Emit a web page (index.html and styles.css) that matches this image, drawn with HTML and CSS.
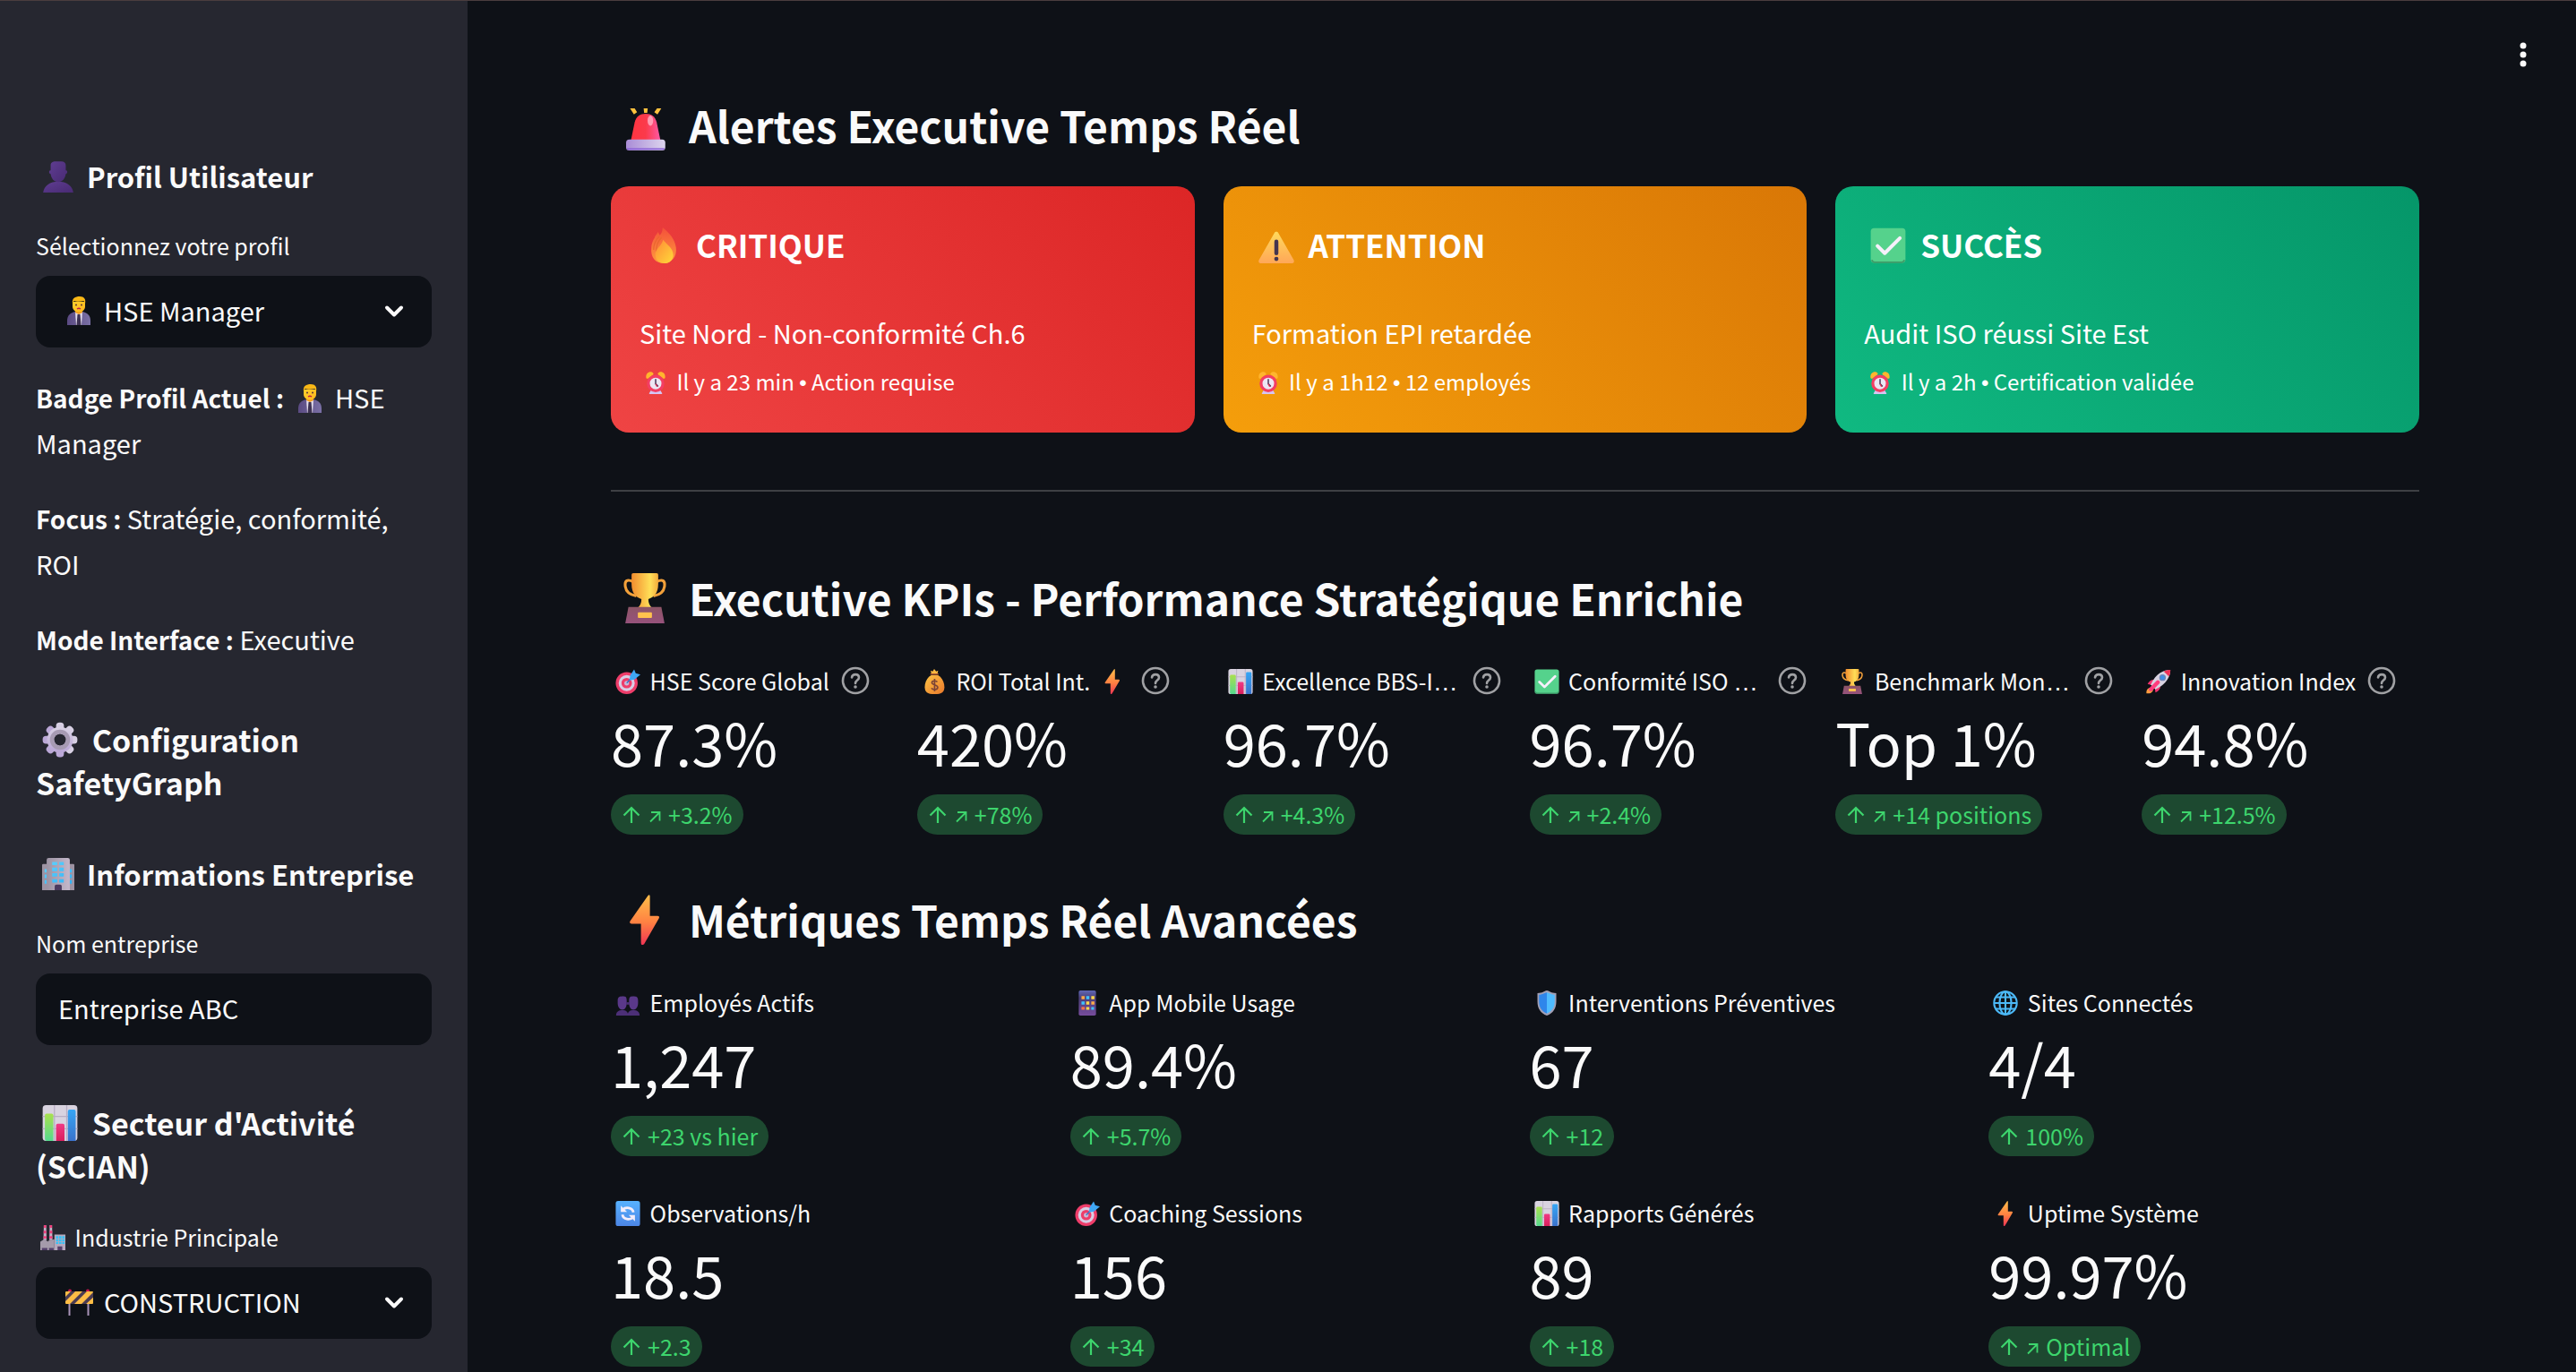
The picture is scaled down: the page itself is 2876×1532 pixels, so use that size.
FILE: index.html
```html
<!DOCTYPE html>
<html lang="fr">
<head>
<meta charset="utf-8">
<meta name="viewport" content="width=device-width, initial-scale=1">
<title>SafetyGraph</title>
<link rel="stylesheet" href="styles.css">
</head>
<body>
<svg class="sprite" aria-hidden="true">
  <defs>
    <linearGradient id="gPurple" x1="0" y1="0" x2="1" y2="1"><stop offset="0" stop-color="#5f3d91"/><stop offset="1" stop-color="#482a73"/></linearGradient>
    <linearGradient id="gSuit" x1="0" y1="0" x2="1" y2="0"><stop offset="0" stop-color="#5a4a82"/><stop offset="1" stop-color="#7a70a6"/></linearGradient>
    <linearGradient id="gFace" x1="0" y1="0" x2="1" y2="1"><stop offset="0" stop-color="#ffd02c"/><stop offset="1" stop-color="#ffb51c"/></linearGradient>
    <linearGradient id="gGear" x1="0" y1="0" x2="0" y2="1"><stop offset="0" stop-color="#d9d2e4"/><stop offset="1" stop-color="#b9a5d6"/></linearGradient>
    <linearGradient id="gWall" x1="0" y1="0" x2="1" y2="0"><stop offset="0" stop-color="#9c93a3"/><stop offset="1" stop-color="#c4b8cb"/></linearGradient>
    <linearGradient id="gPane" x1="0" y1="0" x2="1" y2="1"><stop offset="0" stop-color="#62d3ff"/><stop offset="1" stop-color="#2fb2f5"/></linearGradient>
    <linearGradient id="gGreenBar" x1="0" y1="0" x2="0" y2="1"><stop offset="0" stop-color="#a9e04e"/><stop offset="1" stop-color="#55d98e"/></linearGradient>
    <linearGradient id="gPinkBar" x1="0" y1="0" x2="0" y2="1"><stop offset="0" stop-color="#f03a86"/><stop offset="1" stop-color="#d91f5c"/></linearGradient>
    <linearGradient id="gBlueBar" x1="0" y1="0" x2="0" y2="1"><stop offset="0" stop-color="#36a6f5"/><stop offset="1" stop-color="#3a72cc"/></linearGradient>
    <linearGradient id="gSiren" x1="0" y1="0" x2="1" y2="0"><stop offset="0" stop-color="#ff3440"/><stop offset="0.5" stop-color="#fb3a4b"/><stop offset="1" stop-color="#ff5aa6"/></linearGradient>
    <linearGradient id="gBase" x1="0" y1="0" x2="1" y2="0"><stop offset="0" stop-color="#a98cd6"/><stop offset="1" stop-color="#ddd5ee"/></linearGradient>
    <linearGradient id="gFire" x1="0" y1="0" x2="0" y2="1"><stop offset="0" stop-color="#f4503a"/><stop offset="1" stop-color="#ff9b3d"/></linearGradient>
    <linearGradient id="gFlame" x1="0" y1="0" x2="1" y2="1"><stop offset="0" stop-color="#ff8a35"/><stop offset="1" stop-color="#ffd93a"/></linearGradient>
    <linearGradient id="gWarn" x1="0" y1="0" x2="0" y2="1"><stop offset="0" stop-color="#ffd95c"/><stop offset="1" stop-color="#ffa758"/></linearGradient>
    <linearGradient id="gCup" x1="0" y1="0" x2="1" y2="0"><stop offset="0" stop-color="#f28d2f"/><stop offset="0.7" stop-color="#ffdf58"/><stop offset="1" stop-color="#f3ac3c"/></linearGradient>
    <linearGradient id="gPlinth" x1="0" y1="0" x2="0" y2="1"><stop offset="0" stop-color="#8d5566"/><stop offset="1" stop-color="#96527c"/></linearGradient>
    <linearGradient id="gBolt" x1="0" y1="0" x2="0" y2="1"><stop offset="0" stop-color="#ffbe4a"/><stop offset="0.55" stop-color="#ff8142"/><stop offset="1" stop-color="#f03554"/></linearGradient>
    <linearGradient id="gSync" x1="0" y1="0" x2="0" y2="1"><stop offset="0" stop-color="#57b2ff"/><stop offset="1" stop-color="#4c86e6"/></linearGradient>
    <linearGradient id="gPhone" x1="0" y1="0" x2="0" y2="1"><stop offset="0" stop-color="#5f67b5"/><stop offset="0.3" stop-color="#4b3f78"/><stop offset="1" stop-color="#764c9c"/></linearGradient>
    <linearGradient id="gBag" x1="0" y1="0" x2="1" y2="1"><stop offset="0" stop-color="#ffc545"/><stop offset="1" stop-color="#e8772b"/></linearGradient>
    <clipPath id="cBoard"><rect x="1" y="4" width="31" height="14" rx="1"/></clipPath>
  </defs>

  <symbol id="bust" viewBox="0 0 32 32">
    <path d="M1 32C2 25 8 21 16 21S30 25 31 32Z" fill="url(#gPurple)"/>
    <path d="M8.500 5C8.500 2 11 1 13 1H19C22 1 23.500 2.500 23.500 5V10C25.500 9.500 25.500 13.500 23.500 13.500C23 18 20 21.500 16 21.500S9 18 8.500 13.500C6.500 13.500 6.500 9.500 8.500 10Z" fill="url(#gPurple)"/>
  </symbol>
  <symbol id="busts" viewBox="0 0 32 32">
    <path d="M1 32C1 27 4 25 9 25S16 27 16.500 32ZM15.500 32C16 27 18 25 23 25S31 27 31 32Z" fill="#4c2f77"/>
    <path d="M3 13C3 8 6 7.500 9.500 7.500S14.500 8 14.500 13V16C14.500 21 12.500 24.500 9 24.500S3 21 3 16ZM17.500 13C17.500 8 19.500 7.500 23 7.500S29 8 29 13V16C29 21 26.500 24.500 23 24.500S17.500 21 17.500 16Z" fill="#5a3889"/>
    <path d="M14 15H18V18H14Z" fill="#4c2f77"/>
  </symbol>
  <symbol id="worker" viewBox="0 0 32 32">
    <path d="M3 32V27C3 21 7 18 12 17H20C25 18 29 21 29 27V32Z" fill="url(#gSuit)"/>
    <path d="M12 17H20L19 32H13Z" fill="#e4ddec"/>
    <path d="M14.500 20H17.500L18.500 32H13.500Z" fill="#3d3152"/>
    <path d="M12 14H20V18L16 20L12 18Z" fill="#f09a1d"/>
    <path d="M9 6H23V11C23 15 20 17.500 16 17.500S9 15 9 11Z" fill="url(#gFace)"/>
    <path d="M9 8C8 2 12 0 17 0C22 0 24 3 23 8L21.500 5C18 6 13 6 10.500 5Z" fill="#f9b816"/>
    <circle cx="13" cy="9.500" r="1" fill="#53303c"/><circle cx="19" cy="9.500" r="1" fill="#53303c"/>
    <path d="M14 14Q16 12.500 18 14" stroke="#bb1d48" stroke-width="1.400" fill="none"/>
  </symbol>
  <symbol id="gear" viewBox="0 0 32 32">
    <g fill="url(#gGear)">
      <rect x="12.500" y="0.500" width="7" height="31" rx="3"/>
      <rect x="12.500" y="0.500" width="7" height="31" rx="3" transform="rotate(45 16 16)"/>
      <rect x="12.500" y="0.500" width="7" height="31" rx="3" transform="rotate(90 16 16)"/>
      <rect x="12.500" y="0.500" width="7" height="31" rx="3" transform="rotate(135 16 16)"/>
      <circle cx="16" cy="16" r="11.500"/>
    </g>
    <circle cx="16" cy="16" r="7" fill="#262730" stroke="#a79bb3" stroke-width="4"/>
    <circle cx="16" cy="16" r="5" fill="#262730"/>
  </symbol>
  <symbol id="office" viewBox="0 0 32 32">
    <path d="M0 7Q0 6 1 6H31Q32 6 32 7V32H0Z" fill="#9d93a3"/>
    <path d="M4.500 2Q4.500 0 6.500 0H25.500Q27.500 0 27.500 2V32H4.500Z" fill="url(#gWall)"/>
    <path d="M10 4H15V7H10ZM17 4H21.500V7H17ZM10 9.500H15V13H10ZM17 9.500H21.500V13H17ZM10 15H15V18.500H10ZM17 15H21.500V18.500H17ZM10 21H15V24.500H10ZM17 21H21.500V24.500H17ZM2.500 11H4.500V14.500H2.500ZM2.500 16.500H4.500V20H2.500ZM2.500 22H4.500V25.500H2.500ZM27.500 11H29.500V14.500H27.500ZM27.500 16.500H29.500V20H27.500ZM27.500 22H29.500V25.500H27.500Z" fill="url(#gPane)"/>
    <path d="M12.500 32V28Q12.500 26.500 14 26.500H18Q19.500 26.500 19.500 28V32Z" fill="#4a3a5e"/>
  </symbol>
  <symbol id="chart" viewBox="0 0 32 32">
    <rect x="0.500" y="0" width="31" height="32" rx="3" fill="#d9d3e0"/>
    <path d="M11 0V32M22 0V32M0.500 10H31.500M0.500 21H31.500" stroke="#b9aec4" stroke-width="1"/>
    <path d="M2.500 9Q2.500 7.500 4 7.500H8.500Q10 7.500 10 9V32H4Q2.500 32 2.500 30Z" fill="url(#gGreenBar)"/>
    <path d="M12.500 18Q12.500 16.500 14 16.500H18.500Q20 16.500 20 18V32H12.500Z" fill="url(#gPinkBar)"/>
    <path d="M23 5.500Q23 4 24.500 4H28.500Q30 4 30 5.500V32H23Z" fill="url(#gBlueBar)"/>
  </symbol>
  <symbol id="factory" viewBox="0 0 32 32">
    <path d="M4.500 0H7.500L8 19H4ZM12 0H15L15.500 19H11.500Z" fill="#bfb3c6"/>
    <path d="M4.500 0H7.500V3.500H4.400ZM4.400 7H7.600V10.500H4.300ZM4.200 14H7.800V17H4.100ZM12 0H15V3.500H12ZM12 7H15.200V10.500H11.800ZM11.700 14H15.400V17H11.600Z" fill="#f03f7c"/>
    <path d="M0 21L5 18L10 21V20L18 18V32H0Z" fill="#a59bab"/>
    <rect x="18" y="12" width="14" height="20" fill="#b5a9bd"/>
    <path d="M20 14H23V17H20ZM24 14H27V17H24ZM28 14H31V17H28ZM20 18H23V20.500H20ZM24 18H27V20.500H24ZM28 18H31V20.500H28ZM20 21.500H23V24H20ZM24 21.500H27V24H24ZM28 21.500H31V24H28Z" fill="#35c3f7"/>
    <path d="M2 29H9V32H2ZM11 29H17V32H11ZM22 27H28V32H22Z" fill="#54406a"/>
  </symbol>
  <symbol id="barrier" viewBox="0 0 32 32">
    <path d="M5.500 18V31M26.500 18V31" stroke="#a893b8" stroke-width="2"/>
    <circle cx="6" cy="3.500" r="2" fill="#c8164d"/><circle cx="26" cy="3.500" r="2" fill="#c8164d"/>
    <g clip-path="url(#cBoard)">
      <rect x="0" y="3" width="32" height="16" fill="#ffbd45"/>
      <path d="M-2 13L8 3H13L-3 19ZM5 19L21 3H26L10 19ZM18 19L34 3V9L23 19Z" fill="#4b3c52"/>
    </g>
  </symbol>
  <symbol id="siren" viewBox="0 0 32 32">
    <path d="M4.500 2L9 9L11 7.500L7.500 2ZM15 3H18L17.500 8H15.500ZM26 2L22 7.500L24 9L28.500 2Z" fill="#ffc23e"/>
    <path d="M7 26L9.500 14C10.500 10 13 8.500 16.500 8.500S22.500 10 23.500 14L26 26Z" fill="url(#gSiren)"/>
    <ellipse cx="19.500" cy="13" rx="1.800" ry="3.300" fill="#ffb3c6" opacity="0.800"/>
    <rect x="4" y="25" width="25" height="7" rx="2" fill="url(#gBase)"/>
    <path d="M4.500 31H28.500" stroke="#8b63d6" stroke-width="1"/>
  </symbol>
  <symbol id="fire" viewBox="0 0 32 32">
    <path d="M15 0C21 5 26 10 27 18C28 26 23 32 16 32S4 27 5 18C5 15 6 12 8 9C8 8 9 7 11 4L12.500 7C14.500 5 15 3 15 0Z" fill="url(#gFire)"/>
    <path d="M7 20C7 14 10 10 12 8M9.500 22C9 15 12 11 14 9" stroke="#e9682f" stroke-width="1" fill="none"/>
    <path d="M15.500 11C18 15 24.500 18 24.500 24.500C24.500 29 21 32 16.500 32S8.500 29 8.500 24C8.500 19 14 17 15.500 11Z" fill="url(#gFlame)"/>
  </symbol>
  <symbol id="warning" viewBox="0 0 32 32">
    <path d="M14.200 5C15 3.500 17 3.500 17.800 5L31.500 29C32.200 30.500 31.500 32 30 32H2C0.500 32 -0.200 30.500 0.500 29Z" fill="url(#gWarn)"/>
    <path d="M16 12.500V23" stroke="#45354f" stroke-width="3.600" stroke-linecap="round"/>
    <circle cx="16" cy="28" r="1.900" fill="#45354f"/>
  </symbol>
  <symbol id="check" viewBox="0 0 32 32">
    <rect x="0.500" y="0.500" width="31" height="31" rx="3" fill="#55d28c"/>
    <path d="M1.500 29Q2 31 4 31H28Q30 31 30.500 29" stroke="#3d9a68" stroke-width="1.400" fill="none"/>
    <path d="M6.500 16.500L13 23L26.500 9.500" stroke="#f6f0fb" stroke-width="3.200" stroke-linecap="round" stroke-linejoin="round" fill="none"/>
  </symbol>
  <symbol id="clock" viewBox="0 0 32 32">
    <path d="M3 10C2 4 6 1 10 1.500C12 2 13 3 13 5L5 11ZM29 10C30 4 26 1 22 1.500C20 2 19 3 19 5L27 11Z" fill="#ffb52e"/>
    <path d="M7 31L10 26H22L25 31Q25 32 24 32H8Q7 32 7 31Z" fill="#d5c5f3"/>
    <circle cx="16" cy="17.500" r="10" fill="#ece6f3" stroke="#f43e63" stroke-width="4"/>
    <path d="M16 12V18L19 21" stroke="#473454" stroke-width="1.800" fill="none" stroke-linecap="round"/>
    <path d="M16 18L18 22" stroke="#ec2d55" stroke-width="1.400"/>
  </symbol>
  <symbol id="trophy" viewBox="0 0 32 32">
    <path d="M8.500 5.500C4.500 3.500 3 5 3.500 8.500S7 14 10.500 14.500M23.500 5.500C27.500 3.500 29 5 28.500 8.500S25 14 21.500 14.500" stroke="#f2a03a" stroke-width="1.800" fill="none"/>
    <path d="M7.500 1Q7.500 0 8.500 0H23.500Q24.500 0 24.500 1V7C24.500 13 21.500 15.500 18.200 16.500C18.200 19 19 20.500 20.500 22H11.500C13 20.500 13.800 19 13.800 16.500C10.500 15.500 7.500 13 7.500 7Z" fill="url(#gCup)"/>
    <path d="M5.500 21.500H26.500L28.500 32H3.500Z" fill="url(#gPlinth)"/>
    <rect x="11.500" y="25" width="9" height="3.500" rx="0.500" fill="#ffc24e"/>
  </symbol>
  <symbol id="target" viewBox="0 0 32 32">
    <circle cx="14.500" cy="18" r="14" fill="#ee3d6a"/>
    <circle cx="14.500" cy="18" r="8.500" fill="#ee3d6a" stroke="#d8cde4" stroke-width="3.600"/>
    <circle cx="14.500" cy="18" r="3" fill="#c7b9d8"/>
    <path d="M14.500 18L24 8" stroke="#3a75c8" stroke-width="1.600"/>
    <path d="M19 8L24 0.500L26 5.500L32 7L24.500 13.500L18 14.500Z" fill="#3fa7f5"/>
  </symbol>
  <symbol id="moneybag" viewBox="0 0 32 32">
    <path d="M11.500 2L14 3L16 0L18.500 3L21 2L20 7H12.500Z" fill="#ffb940"/>
    <path d="M11 6.500H21.500" stroke="#b2562c" stroke-width="1.600"/>
    <path d="M12 8H21C26 11 29 17 29 23C29 29 26 32 16.500 32S4 29 4 23C4 17 7 11 12 8Z" fill="url(#gBag)"/>
    <path d="M20 16.500C18.500 14.500 13 14.500 13 17.500C13 21 20.500 19.500 20.500 23.500C20.500 27 14 27 12.500 24.500M16.500 12.500V28.500" stroke="#7c4436" stroke-width="1.900" fill="none"/>
  </symbol>
  <symbol id="bolt" viewBox="0 0 32 32">
    <path d="M18 0.500Q19.200 -0.500 19.200 1V13.500H24Q25.500 13.500 25 15L15.500 31.500Q13.500 33 13.500 30.500V18.500H7.500Q6 18.500 6.500 17Z" fill="url(#gBolt)"/>
  </symbol>
  <symbol id="rocket" viewBox="0 0 32 32">
    <path d="M0.500 31C0 27 2 24 6 24L9 27C8 30 4 32 0.500 31Z" fill="#ff9d3f"/>
    <path d="M2 19C4 15 8 13 11 14L9 21ZM12 30C17 28 19 24 18 21L11 23Z" fill="#f2316d"/>
    <path d="M31 1C22 1 12 6 6 20L12 26C25 20 31 10 31 1Z" fill="#d9d3e2"/>
    <path d="M31 1C28 1 25 1.500 22.500 3L29 9.500C30.500 7 31 4 31 1Z" fill="#f02f56"/>
    <circle cx="21" cy="11" r="3.500" fill="#3f8fe8" stroke="#7086b8" stroke-width="1.400"/>
    <path d="M6 26L15 17" stroke="#ff3c7d" stroke-width="5" stroke-linecap="round"/>
  </symbol>
  <symbol id="phone" viewBox="0 0 32 32">
    <rect x="5" y="0" width="22" height="32" rx="2" fill="url(#gPhone)"/>
    <path d="M8.500 7H12.500V11H8.500ZM21 14H25V18H21Z" fill="#ffab48"/>
    <path d="M14.500 7H18.500V11H14.500ZM8.500 14H12.500V18H8.500ZM21 21H24.500V24.500H21Z" fill="#3fc3ff"/>
    <path d="M21 7H25V11H21ZM14.500 14H18.500V18H14.500ZM14.500 21H18.500V24.500H14.500Z" fill="#ffd84b"/>
    <path d="M8.500 21H12.500V24.500H8.500Z" fill="#ff7448"/>
  </symbol>
  <symbol id="shield" viewBox="0 0 32 32">
    <path d="M16 0C20 1 21 3 28 3.500V14C28 23 24 29 16 32C8 29 4 23 4 14V3.500C11 3 12 1 16 0Z" fill="#a2a0b5"/>
    <path d="M16 2.500C12.500 3 11 5 6 5.500V14C6 21.500 9.500 26.500 16 29.500Z" fill="#2f86ea"/>
    <path d="M16 2.500C19.500 3 21 5 26 5.500V14C26 21.500 22.500 26.500 16 29.500Z" fill="#4fbcff"/>
  </symbol>
  <symbol id="globe" viewBox="0 0 32 32">
    <g fill="none" stroke="#4cb9f7" stroke-width="2.400">
      <circle cx="16" cy="16" r="14.500"/><ellipse cx="16" cy="16" rx="7.500" ry="14.500"/>
      <path d="M16 1.500V30.500M1.500 16H30.500M4 8.500H28M4 23.500H28"/>
    </g>
  </symbol>
  <symbol id="sync" viewBox="0 0 32 32">
    <rect x="0.500" y="0" width="31" height="32" rx="3" fill="url(#gSync)"/>
    <path d="M9.500 11C13 7.500 22 8 23 14.500M22.500 21C19 24.500 10 24 9 17.500" stroke="#f3edfa" stroke-width="3.200" fill="none"/>
    <path d="M7 6V14H15ZM25 26V18H17Z" fill="#f3edfa"/>
  </symbol>

  <symbol id="up" viewBox="0 0 22 22"><path d="M11 20V3M2.500 11.500L11 3L19.500 11.500" fill="none" stroke="currentColor" stroke-width="2.200"/></symbol>
  <symbol id="northeast" viewBox="0 0 16 22"><path d="M3 18.500L13 8.500M4 8H13.500V17.500" fill="none" stroke="currentColor" stroke-width="1.800"/></symbol>
  <symbol id="chevron" viewBox="0 0 24 16"><path d="M4 3.500L12 11.500L20 3.500" fill="none" stroke="currentColor" stroke-width="4" stroke-linecap="round" stroke-linejoin="round"/></symbol>
  <symbol id="question" viewBox="0 0 32 32"><g fill="none" stroke="currentColor" stroke-width="2.600" stroke-linecap="round"><circle cx="16" cy="16" r="14"/><path d="M12 12.500C12.500 8 20 8 20 12.500C20 15.500 16 15.500 16 19"/></g><circle cx="16" cy="23" r="1.800" fill="currentColor"/></symbol>
</svg>

<div class="app">
  <aside class="sidebar">
    <h3><svg class="emoji e36"><use href="#bust"/></svg> Profil Utilisateur</h3>
    <div class="field">
      <label for="profile">Sélectionnez votre profil</label>
      <div class="select-box">
        <select id="profile"><option>HSE Manager</option></select>
        <svg class="select-icon"><use href="#worker"/></svg>
        <svg class="chevron"><use href="#chevron"/></svg>
      </div>
    </div>
    <div class="profile">
      <p><strong>Badge Profil Actuel :</strong> <svg class="emoji e32"><use href="#worker"/></svg> HSE Manager</p>
      <p><strong>Focus :</strong> Stratégie, conformité, ROI</p>
      <p><strong>Mode Interface :</strong> Executive</p>
    </div>
    <h2><svg class="emoji e40"><use href="#gear"/></svg> Configuration SafetyGraph</h2>
    <h3 class="subsection"><svg class="emoji e36"><use href="#office"/></svg> Informations Entreprise</h3>
    <div class="field">
      <label for="company">Nom entreprise</label>
      <input id="company" type="text" value="Entreprise ABC">
    </div>
    <h2><svg class="emoji e40"><use href="#chart"/></svg> Secteur d'Activité (SCIAN)</h2>
    <div class="field">
      <label for="industry"><svg class="emoji e28"><use href="#factory"/></svg> Industrie Principale</label>
      <div class="select-box">
        <select id="industry"><option>CONSTRUCTION</option></select>
        <svg class="select-icon"><use href="#barrier"/></svg>
        <svg class="chevron"><use href="#chevron"/></svg>
      </div>
    </div>
  </aside>

  <main class="main">
    <header class="toolbar">
      <button class="menu" type="button" aria-label="Menu"><svg viewBox="0 0 32 32"><circle cx="16" cy="6" r="3.500"/><circle cx="16" cy="16" r="3.500"/><circle cx="16" cy="26" r="3.500"/></svg></button>
    </header>

    <section>
      <h1><svg class="emoji e56"><use href="#siren"/></svg> Alertes Executive Temps Réel</h1>
      <div class="alerts">
        <article class="alert critical">
          <h4><svg class="emoji e40"><use href="#fire"/></svg> CRITIQUE</h4>
          <p>Site Nord - Non-conformité Ch.6</p>
          <small><svg class="emoji e26"><use href="#clock"/></svg> Il y a 23 min <span class="dot">•</span> Action requise</small>
        </article>
        <article class="alert caution">
          <h4><svg class="emoji e40"><use href="#warning"/></svg> ATTENTION</h4>
          <p>Formation EPI retardée</p>
          <small><svg class="emoji e26"><use href="#clock"/></svg> Il y a 1h12 <span class="dot">•</span> 12 employés</small>
        </article>
        <article class="alert success">
          <h4><svg class="emoji e40"><use href="#check"/></svg> SUCCÈS</h4>
          <p>Audit ISO réussi Site Est</p>
          <small><svg class="emoji e26"><use href="#clock"/></svg> Il y a 2h <span class="dot">•</span> Certification validée</small>
        </article>
      </div>
    </section>

    <hr>

    <section>
      <h1><svg class="emoji e56"><use href="#trophy"/></svg> Executive KPIs - Performance Stratégique Enrichie</h1>
      <div class="metrics six">
        <div class="metric">
          <div class="label"><span><svg class="emoji e28"><use href="#target"/></svg> HSE Score Global</span><button class="help" type="button" aria-label="Aide"><svg><use href="#question"/></svg></button></div>
          <div class="value">87.3%</div>
          <div class="delta"><svg class="up"><use href="#up"/></svg><svg class="ne"><use href="#northeast"/></svg>+3.2%</div>
        </div>
        <div class="metric">
          <div class="label"><span><svg class="emoji e28"><use href="#moneybag"/></svg> ROI Total Int. <svg class="emoji e28"><use href="#bolt"/></svg></span><button class="help" type="button" aria-label="Aide"><svg><use href="#question"/></svg></button></div>
          <div class="value">420%</div>
          <div class="delta"><svg class="up"><use href="#up"/></svg><svg class="ne"><use href="#northeast"/></svg>+78%</div>
        </div>
        <div class="metric">
          <div class="label cut"><span><svg class="emoji e28"><use href="#chart"/></svg> Excellence BBS-I<span class="more">…</span></span><button class="help" type="button" aria-label="Aide"><svg><use href="#question"/></svg></button></div>
          <div class="value">96.7%</div>
          <div class="delta"><svg class="up"><use href="#up"/></svg><svg class="ne"><use href="#northeast"/></svg>+4.3%</div>
        </div>
        <div class="metric">
          <div class="label cut"><span><svg class="emoji e28"><use href="#check"/></svg> Conformité ISO <span class="more">…</span></span><button class="help" type="button" aria-label="Aide"><svg><use href="#question"/></svg></button></div>
          <div class="value">96.7%</div>
          <div class="delta"><svg class="up"><use href="#up"/></svg><svg class="ne"><use href="#northeast"/></svg>+2.4%</div>
        </div>
        <div class="metric">
          <div class="label cut"><span><svg class="emoji e28"><use href="#trophy"/></svg> Benchmark Mon<span class="more">…</span></span><button class="help" type="button" aria-label="Aide"><svg><use href="#question"/></svg></button></div>
          <div class="value">Top 1%</div>
          <div class="delta"><svg class="up"><use href="#up"/></svg><svg class="ne"><use href="#northeast"/></svg>+14 positions</div>
        </div>
        <div class="metric">
          <div class="label"><span><svg class="emoji e28"><use href="#rocket"/></svg> Innovation Index</span><button class="help" type="button" aria-label="Aide"><svg><use href="#question"/></svg></button></div>
          <div class="value">94.8%</div>
          <div class="delta"><svg class="up"><use href="#up"/></svg><svg class="ne"><use href="#northeast"/></svg>+12.5%</div>
        </div>
      </div>
    </section>

    <section class="realtime">
      <h1><svg class="emoji e56"><use href="#bolt"/></svg> Métriques Temps Réel Avancées</h1>
      <div class="metrics four">
        <div class="metric">
          <div class="label"><span><svg class="emoji e28"><use href="#busts"/></svg> Employés Actifs</span></div>
          <div class="value">1,247</div>
          <div class="delta"><svg class="up"><use href="#up"/></svg>+23 vs hier</div>
        </div>
        <div class="metric">
          <div class="label"><span><svg class="emoji e28"><use href="#phone"/></svg> App Mobile Usage</span></div>
          <div class="value">89.4%</div>
          <div class="delta"><svg class="up"><use href="#up"/></svg>+5.7%</div>
        </div>
        <div class="metric">
          <div class="label"><span><svg class="emoji e28"><use href="#shield"/></svg> Interventions Préventives</span></div>
          <div class="value">67</div>
          <div class="delta"><svg class="up"><use href="#up"/></svg>+12</div>
        </div>
        <div class="metric">
          <div class="label"><span><svg class="emoji e28"><use href="#globe"/></svg> Sites Connectés</span></div>
          <div class="value">4/4</div>
          <div class="delta"><svg class="up"><use href="#up"/></svg>100%</div>
        </div>
        <div class="metric">
          <div class="label"><span><svg class="emoji e28"><use href="#sync"/></svg> Observations/h</span></div>
          <div class="value">18.5</div>
          <div class="delta"><svg class="up"><use href="#up"/></svg>+2.3</div>
        </div>
        <div class="metric">
          <div class="label"><span><svg class="emoji e28"><use href="#target"/></svg> Coaching Sessions</span></div>
          <div class="value">156</div>
          <div class="delta"><svg class="up"><use href="#up"/></svg>+34</div>
        </div>
        <div class="metric">
          <div class="label"><span><svg class="emoji e28"><use href="#chart"/></svg> Rapports Générés</span></div>
          <div class="value">89</div>
          <div class="delta"><svg class="up"><use href="#up"/></svg>+18</div>
        </div>
        <div class="metric">
          <div class="label"><span><svg class="emoji e28"><use href="#bolt"/></svg> Uptime Système</span></div>
          <div class="value">99.97%</div>
          <div class="delta"><svg class="up"><use href="#up"/></svg><svg class="ne"><use href="#northeast"/></svg>Optimal</div>
        </div>
      </div>
    </section>
  </main>
</div>
</body>
</html>
```

FILE: styles.css
```css
* {
  box-sizing: border-box;
}

body {
  margin: 0;
  background: #0e1117;
  color: #fafafa;
  font-family: "Noto Sans CJK SC", "Noto Sans", sans-serif;
  font-size: 29px;
  line-height: 51px;
}

h1, h2, h3, h4, p {
  margin: 0;
}

h1, h2, h3, h4, strong {
  font-weight: 600;
}

strong {
  font-size: 28px;
  line-height: 1;
}

button, input, select {
  font: inherit;
  color: inherit;
}

.sprite {
  position: absolute;
  width: 0;
  height: 0;
}

/* Emoji-style icons, sized to the text they sit in */
.emoji {
  overflow: visible;
}

.e26 { width: 26px; height: 26px; margin: 0 5px; vertical-align: -4px; }
.e28 { width: 28px; height: 28px; margin: 0 5px; vertical-align: -4px; }
.e32 { width: 32px; height: 32px; margin: 0 6px; vertical-align: -5px; }
.e36 { width: 36px; height: 36px; margin: 0 7px; vertical-align: -5px; }
.e40 { width: 40px; height: 40px; margin: 0 8px 0 7px; vertical-align: -6px; }
.e56 { width: 56px; height: 56px; margin: 0 10px; vertical-align: -8px; }

.app {
  display: grid;
  grid-template-columns: 522px 1fr;
  min-height: 100vh;
  border-top: 1px solid #4a3d3e;
}

/* Sidebar */
.sidebar {
  padding: 173px 40px 35px;
  background: #262730;
}

.sidebar h3 {
  font-size: 31px;
  line-height: 45px;
}

.sidebar h2 {
  margin-top: 63px;
  font-size: 34px;
  line-height: 48px;
}

.sidebar .subsection {
  margin-top: 55px;
}

.field {
  margin-top: 33px;
}

.field label {
  display: block;
  margin-bottom: 12px;
  font-size: 25px;
  line-height: 44px;
}

.field input,
.field select {
  display: block;
  width: 100%;
  height: 80px;
  padding: 0 25px 4px;
  border: 0;
  border-radius: 16px;
  background: #0e1117;
  appearance: none;
}

.select-box {
  position: relative;
}

.field select {
  padding: 0 64px 4px 76px;
}

.select-icon {
  position: absolute;
  top: 23px;
  left: 32px;
  width: 32px;
  height: 32px;
  pointer-events: none;
}

.chevron {
  position: absolute;
  top: 32px;
  right: 30px;
  width: 24px;
  height: 16px;
  pointer-events: none;
}

.profile {
  display: grid;
  gap: 33px;
  margin-top: 30px;
}

/* Main column */
.main {
  position: relative;
  padding: 105px 175px 0 160px;
}

.toolbar {
  position: absolute;
  top: 0;
  left: 0;
  right: 0;
  display: flex;
  justify-content: flex-end;
  height: 120px;
  padding: 44px 43px;
  background: #0e1117;
}

.menu {
  width: 32px;
  height: 32px;
  padding: 0;
  border: 0;
  background: none;
}

.menu svg {
  display: block;
  width: 32px;
  height: 32px;
  fill: #fafafa;
}

.main h1 {
  font-size: 48px;
  line-height: 67px;
}

.alerts {
  display: grid;
  grid-template-columns: repeat(3, 1fr);
  gap: 32px;
  margin-top: 35px;
}

.alert {
  padding: 41px 32px 35px;
  border-radius: 20px;
  color: #fff;
}

.critical { background: linear-gradient(45deg, #ef4444, #dc2626); }
.caution { background: linear-gradient(45deg, #f59e0b, #d97706); }
.success { background: linear-gradient(45deg, #10b981, #059669); }

.alert h4 {
  margin-bottom: 49px;
  font-size: 35px;
  line-height: 48px;
}

.alert small {
  display: block;
  margin-top: 7px;
  font-size: 24px;
  line-height: 44px;
}

/* Western forms of the bullet and the ellipsis */
.dot,
.more {
  font-family: "Liberation Sans", sans-serif;
  line-height: 1;
}

.more {
  font-size: 28px;
}

hr {
  height: 2px;
  margin: 64px 0 85px;
  border: 0;
  background: #3e4044;
}

.realtime {
  margin-top: 61px;
}

.metrics {
  display: grid;
  gap: 41px 32px;
  margin-top: 37px;
}

.six { grid-template-columns: repeat(6, 1fr); }
.four { grid-template-columns: repeat(4, 1fr); }

.label {
  display: flex;
  align-items: center;
  gap: 13px;
  font-size: 25px;
  line-height: 44px;
  white-space: nowrap;
}

.cut {
  justify-content: space-between;
}

.help {
  width: 32px;
  height: 32px;
  padding: 0;
  border: 0;
  background: none;
  color: #a0a1a4;
}

.help svg {
  display: block;
  width: 32px;
  height: 32px;
}

.value {
  font-size: 65px;
  line-height: 92px;
}

.delta {
  display: flex;
  align-items: center;
  gap: 7px;
  width: fit-content;
  margin-top: 13px;
  padding: 0 12px;
  border-radius: 23px;
  background: #1d4930;
  color: #3dd56d;
  font-size: 25px;
  line-height: 45px;
}

.up { width: 22px; height: 22px; }
.ne { width: 16px; height: 22px; }
```
